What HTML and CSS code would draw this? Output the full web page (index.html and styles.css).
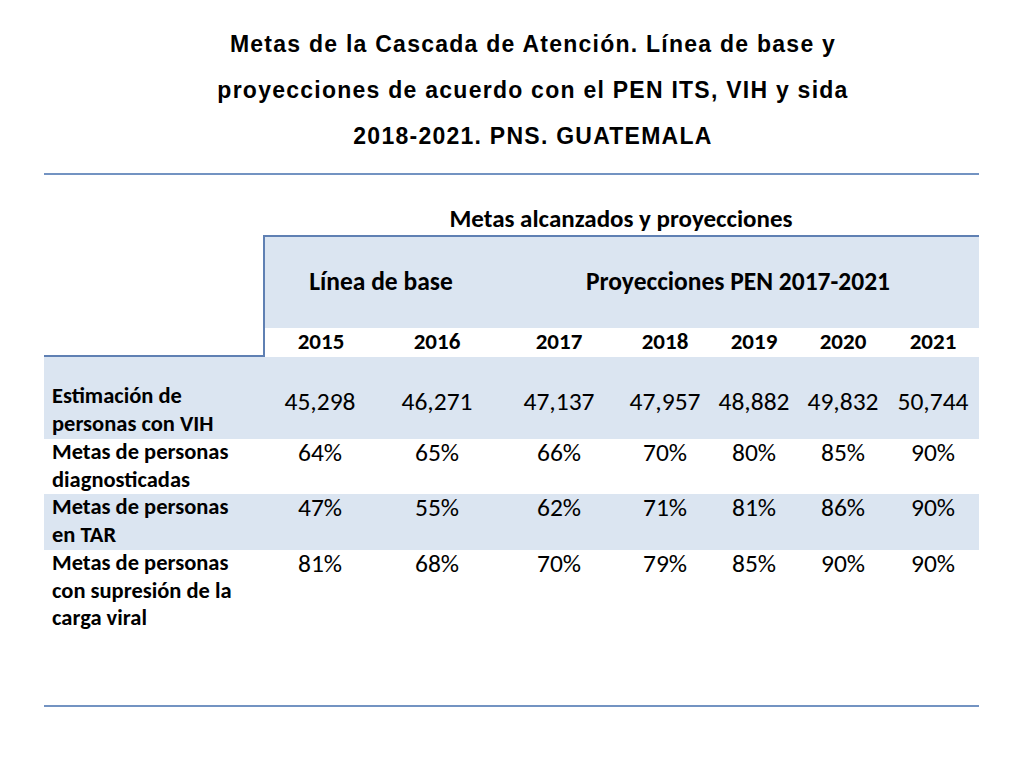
FILE: index.html
```html
<!DOCTYPE html>
<html lang="es">
<head>
<meta charset="utf-8">
<title>Metas de la Cascada de Atención</title>
<link rel="stylesheet" href="styles.css">
</head>
<body>
<h1 class="title">Metas de la Cascada de Atención. Línea de base y<br>proyecciones de acuerdo con el PEN ITS, VIH y sida<br>2018-2021. PNS. GUATEMALA</h1>

<section class="sheet">
  <div class="head">
    <div class="corner"></div>
    <div class="group">Metas alcanzados y proyecciones</div>
    <div class="hd hd-base">Línea de base</div>
    <div class="hd hd-proj">Proyecciones PEN 2017-2021</div>
    <div class="yr yr-first">2015</div>
    <div class="yr">2016</div>
    <div class="yr">2017</div>
    <div class="yr">2018</div>
    <div class="yr">2019</div>
    <div class="yr">2020</div>
    <div class="yr">2021</div>
  </div>

  <div class="row row-est band">
    <div class="label">Estimación de<br>personas con VIH</div>
    <div class="num">45,298</div>
    <div class="num">46,271</div>
    <div class="num">47,137</div>
    <div class="num">47,957</div>
    <div class="num">48,882</div>
    <div class="num">49,832</div>
    <div class="num">50,744</div>
  </div>

  <div class="row row-two">
    <div class="label">Metas de personas<br>diagnosticadas</div>
    <div class="num">64%</div>
    <div class="num">65%</div>
    <div class="num">66%</div>
    <div class="num">70%</div>
    <div class="num">80%</div>
    <div class="num">85%</div>
    <div class="num">90%</div>
  </div>

  <div class="row row-tar band">
    <div class="label">Metas de personas<br>en TAR</div>
    <div class="num">47%</div>
    <div class="num">55%</div>
    <div class="num">62%</div>
    <div class="num">71%</div>
    <div class="num">81%</div>
    <div class="num">86%</div>
    <div class="num">90%</div>
  </div>

  <div class="row">
    <div class="label">Metas de personas<br>con supresión de la<br>carga viral</div>
    <div class="num">81%</div>
    <div class="num">68%</div>
    <div class="num">70%</div>
    <div class="num">79%</div>
    <div class="num">85%</div>
    <div class="num">90%</div>
    <div class="num">90%</div>
  </div>
</section>
</body>
</html>
```

FILE: styles.css
```css
:root {
  --cols: 219px 114px 120px 124px 88px 90px 88px 92px;
  --rule: #7393c2;
  --edge: #5f80b3;
  --fill: #dbe5f1;
  --cal: "Carlito", "Lato", sans-serif;
}

* { box-sizing: border-box; }

html, body {
  margin: 0;
  padding: 0;
  background: #ffffff;
  color: #000000;
}

body {
  width: 1024px;
  height: 768px;
  overflow: hidden;
}

.title {
  margin: 0;
  padding: 21px 0 0 42px;
  font-family: "Liberation Sans", Arial, sans-serif;
  font-weight: bold;
  font-size: 23px;
  letter-spacing: 1.25px;
  line-height: 46px;
  text-align: center;
  height: 173px;
}

.sheet {
  margin-left: 44px;
  width: 935px;
  height: 534px;
  border-top: 2px solid var(--rule);
  border-bottom: 2px solid var(--rule);
  font-family: var(--cal);
}

.head {
  display: grid;
  grid-template-columns: var(--cols);
  grid-template-rows: 60px 93px 29px;
}

.corner {
  grid-column: 1;
  grid-row: 1 / 4;
  border-bottom: 2px solid var(--edge);
}

.group {
  grid-column: 2 / 9;
  grid-row: 1;
  display: flex;
  align-items: flex-end;
  justify-content: center;
  font-weight: bold;
  font-size: 25px;
  line-height: 28px;
  padding-bottom: 2px;
}

.hd {
  grid-row: 2;
  background: var(--fill);
  border-top: 2px solid var(--edge);
  display: flex;
  align-items: center;
  justify-content: center;
  font-weight: bold;
  font-size: 25.5px;
  padding-bottom: 3px;
}

.hd-base {
  grid-column: 2 / 4;
  border-left: 2px solid var(--edge);
}

.hd-proj {
  grid-column: 4 / 9;
}

.yr {
  grid-row: 3;
  display: flex;
  justify-content: center;
  font-weight: bold;
  font-size: 23px;
  line-height: 24px;
  padding-top: 1px;
}

.yr-first {
  border-left: 2px solid var(--edge);
}

.row {
  display: grid;
  grid-template-columns: var(--cols);
}

.band {
  background: var(--fill);
}

.row-est {
  height: 82px;
  align-items: end;
}

.row-two {
  height: 55px;
}

.row-tar {
  height: 56px;
}

.label {
  padding-left: 8px;
  font-weight: bold;
  font-size: 22.5px;
  line-height: 27.5px;
  margin-top: -1px;
}

.row-est .label {
  margin-top: 0;
  padding-bottom: 2px;
}

.num {
  text-align: center;
  font-size: 25.5px;
  line-height: 28px;
  align-self: start;
}

.row-est .num {
  padding-top: 31px;
}
```
